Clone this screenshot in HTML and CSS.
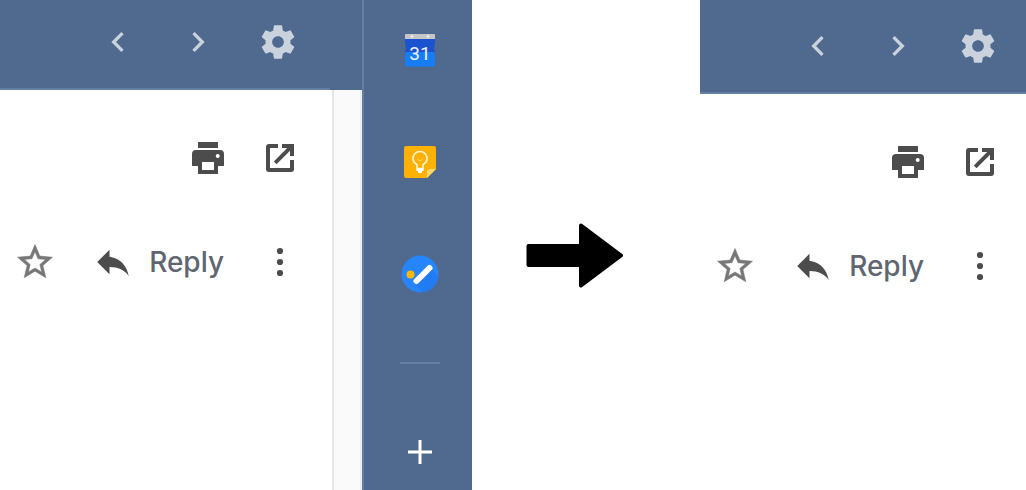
FILE: index.html
```
<!DOCTYPE html>
<html lang="en">
<head>
<meta charset="utf-8">
<meta name="viewport" content="width=device-width, initial-scale=1">
<title>Side panel before and after</title>
<link rel="stylesheet" href="styles.css">
</head>
<body>
<svg class="sprite" aria-hidden="true">
  <symbol id="prev" viewBox="0 0 24 24"><path d="M15.41 7.41 14 6l-6 6 6 6 1.41-1.41L10.83 12z"/></symbol>
  <symbol id="next" viewBox="0 0 24 24"><path d="M10 6 8.59 7.41 13.17 12l-4.58 4.59L10 18l6-6z"/></symbol>
  <symbol id="gear" viewBox="0 0 24 24"><path d="M19.43 12.98c.04-.32.07-.64.07-.98s-.03-.66-.07-.98l2.11-1.65c.19-.15.24-.42.12-.64l-2-3.46c-.12-.22-.39-.3-.61-.22l-2.49 1c-.52-.4-1.08-.73-1.69-.98l-.38-2.65C14.46 2.18 14.25 2 14 2h-4c-.25 0-.46.18-.49.42l-.38 2.65c-.61.25-1.17.59-1.69.98l-2.49-1c-.23-.09-.49 0-.61.22l-2 3.46c-.13.22-.07.49.12.64l2.11 1.65c-.04.32-.07.65-.07.98s.03.66.07.98l-2.11 1.65c-.19.15-.24.42-.12.64l2 3.46c.12.22.39.3.61.22l2.49-1c.52.4 1.08.73 1.69.98l.38 2.65c.03.24.24.42.49.42h4c.25 0 .46-.18.49-.42l.38-2.65c.61-.25 1.17-.59 1.69-.98l2.49 1c.23.09.49 0 .61-.22l2-3.46c.12-.22.07-.49-.12-.64l-2.11-1.65zM12 15.5c-1.93 0-3.5-1.57-3.5-3.5s1.57-3.5 3.5-3.5 3.5 1.57 3.5 3.5-1.57 3.5-3.5 3.5z"/></symbol>
  <symbol id="print" viewBox="0 0 40 40"><path fill-rule="evenodd" d="M10 4h20v6H10zM8 12h24a4 4 0 0 1 4 4v12h-6v8H10v-8H4V16a4 4 0 0 1 4-4zM14 24v8h12v-8zM29.7 16a2 2 0 1 0 0 4 2 2 0 0 0 0-4z"/></symbol>
  <symbol id="open" viewBox="0 0 40 40"><path d="M18 6v4h-8v20h20v-8h4v9a3 3 0 0 1-3 3H9a3 3 0 0 1-3-3V9a3 3 0 0 1 3-3zM22 6h12v12h-4v-5.200L16.500 26.200l-2.700-2.700L27.200 10H22z"/></symbol>
  <symbol id="star" viewBox="0 0 24 24"><path stroke="currentColor" stroke-width=".3" d="m22 9.240-7.190-.62L12 2 9.190 8.630 2 9.240l5.460 4.730L5.820 21 12 17.270 18.180 21l-1.630-7.030zM12 15.400l-3.760 2.270 1-4.280-3.320-2.880 4.380-.38L12 6.100l1.710 4.040 4.380.38-3.320 2.880 1 4.280z"/></symbol>
  <symbol id="reply" viewBox="0 0 24 24"><path d="M10 9V5l-7 7 7 7v-4.100c5 0 8.500 1.600 11 5.100-1-5-4-10-11-11z"/></symbol>
  <symbol id="more" viewBox="0 0 40 40"><circle cx="20" cy="9" r="3.100"/><circle cx="20" cy="20" r="3.100"/><circle cx="20" cy="31" r="3.100"/></symbol>
</svg>
<main class="comparison">
  <section class="before" aria-label="With side panel">
    <div class="view">
      <header class="bar">
        <button class="icon" aria-label="Previous"><svg><use href="#prev"/></svg></button>
        <button class="icon" aria-label="Next"><svg><use href="#next"/></svg></button>
        <button class="icon" aria-label="Settings"><svg><use href="#gear"/></svg></button>
      </header>
      <div class="body">
        <div class="mail">
          <div class="tools">
            <button class="icon" aria-label="Print"><svg><use href="#print"/></svg></button>
            <button class="icon" aria-label="Open in new window"><svg><use href="#open"/></svg></button>
          </div>
          <div class="actions">
            <button class="icon large star" aria-label="Star"><svg><use href="#star"/></svg></button>
            <button class="reply"><svg><use href="#reply"/></svg><span>Reply</span></button>
            <button class="icon" aria-label="More"><svg><use href="#more"/></svg></button>
          </div>
        </div>
        <div class="gutter"></div>
      </div>
    </div>
    <aside class="side">
      <button class="icon" aria-label="Calendar">
        <svg viewBox="0 0 40 40">
          <path fill="#c6c6c6" d="M6 4h28a1 1 0 0 1 1 1v5H5V5a1 1 0 0 1 1-1z"/>
          <circle cx="12" cy="6.500" r="1.200" fill="#f4f4f4"/>
          <circle cx="28" cy="6.500" r="1.200" fill="#f4f4f4"/>
          <path fill="#1b52d0" d="M5 9h30v4l-1 6 1 4H5l1-4-1-6z"/>
          <path fill="#177df7" d="M6 22h28l1 4v9a1.500 1.500 0 0 1-1.500 1.500h-27A1.500 1.500 0 0 1 5 35v-9z"/>
          <text class="date" x="20" y="29.500">31</text>
        </svg>
      </button>
      <button class="icon" aria-label="Keep">
        <svg viewBox="0 0 40 40">
          <path fill="#fcb103" d="M6 4h28a2 2 0 0 1 2 2v21l-9 9H6a2 2 0 0 1-2-2V6a2 2 0 0 1 2-2z"/>
          <path fill="#ffd86d" d="M27 36v-7a2 2 0 0 1 2-2h7z"/>
          <path fill="none" stroke="#fff4d7" stroke-width="1.600" d="M17 26.500v-4c-2.500-1.200-4-3.500-4-6a7 7 0 0 1 14 0c0 2.500-1.500 4.800-4 6v4z"/>
          <path fill="none" stroke="#fff4d7" stroke-opacity=".6" d="m17.500 17 2.500 2 2.500-2"/>
          <path fill="#fff" d="M16.500 26h7v3h-1.500v2h-4v-2h-1.500z"/>
        </svg>
      </button>
      <button class="icon" aria-label="Tasks">
        <svg viewBox="0 0 40 40">
          <circle cx="20" cy="20" r="18.500" fill="#2684fc"/>
          <path fill="#217cf3" d="m14.500 29 8 9.300c8-.8 14.500-7.300 15.700-15.300L32 15z"/>
          <circle cx="10.500" cy="20.500" r="4" fill="#fbb708"/>
          <path stroke="#fff" stroke-width="6" stroke-linecap="round" d="M16.500 27 29.500 14"/>
        </svg>
      </button>
      <hr class="divider">
      <button class="icon" aria-label="Get add-ons">
        <svg viewBox="0 0 40 40"><path fill="none" stroke="#fff" stroke-width="3" d="M8 20h24M20 8v24"/></svg>
      </button>
    </aside>
  </section>
  <div class="arrow">
    <svg viewBox="0 0 97 65" role="img" aria-label="becomes"><path stroke="#000" stroke-width="4" stroke-linejoin="round" d="M2.500 23H55V2.500L95 32.500 55 62.500V42H2.500z"/></svg>
  </div>
  <section class="view after" aria-label="Without side panel">
    <header class="bar">
      <button class="icon" aria-label="Previous"><svg><use href="#prev"/></svg></button>
      <button class="icon" aria-label="Next"><svg><use href="#next"/></svg></button>
      <button class="icon" aria-label="Settings"><svg><use href="#gear"/></svg></button>
    </header>
    <div class="mail">
      <div class="tools">
        <button class="icon" aria-label="Print"><svg><use href="#print"/></svg></button>
        <button class="icon" aria-label="Open in new window"><svg><use href="#open"/></svg></button>
      </div>
      <div class="actions">
        <button class="icon large star" aria-label="Star"><svg><use href="#star"/></svg></button>
        <button class="reply"><svg><use href="#reply"/></svg><span>Reply</span></button>
        <button class="icon" aria-label="More"><svg><use href="#more"/></svg></button>
      </div>
    </div>
  </section>
</main>
</body>
</html>
```
FILE: styles.css
```
* { box-sizing: border-box; }
body { margin: 0; background: #fff; font-family: Inter, Roboto, "Liberation Sans", sans-serif; }
button { display: flex; align-items: center; padding: 0; border: 0; background: none; color: inherit; font: inherit; cursor: pointer; }
svg { display: block; }
.sprite { position: absolute; width: 0; height: 0; }
.comparison { display: grid; grid-template-columns: 472fr 228fr 326fr; min-height: 100vh; }
.before { display: flex; }
.view { display: flex; flex-direction: column; flex: 1; }
.bar { display: flex; justify-content: flex-end; gap: 40px; padding: 22px 64px 28px 0; background: linear-gradient(#667e9f, #667e9f) left bottom / calc(100% - 32px) 2px no-repeat #4f6a8e; color: #cad2de; }
.after .bar { padding: 26px 28px 28px 0; background-size: 100% 2px; }
.icon { flex: none; width: 40px; height: 40px; }
.icon svg { width: 100%; height: 100%; fill: currentColor; }
.large { width: 42px; height: 42px; }
.body { display: flex; flex: 1; }
.mail { flex: 1; padding: 48px 32px 0 0; color: #4c4c4c; }
.after .mail { padding-right: 26px; }
.tools { display: flex; justify-content: flex-end; gap: 32px; }
.actions { display: flex; align-items: center; justify-content: flex-end; gap: 36px; margin-top: 63px; }
.star { color: #777; }
.reply { gap: 15px; }
.reply svg { width: 42px; height: 42px; fill: currentColor; }
.reply span { color: #5f6670; font-size: 28px; font-weight: 500; line-height: 32px; }
.gutter { width: 30px; background: #fafafa; border: solid #e6e6e6; border-width: 0 2px; border-right-color: #eee; }
.side { display: flex; flex-direction: column; align-items: center; width: 110px; padding: 30px 0 0 4px; background: #4f6a8e; border-left: 2px solid #667e9f; }
.side .icon + .icon { margin-top: 72px; }
.divider { width: 40px; height: 2px; margin: 68px 0; border: 0; background: #667e9f; }
.date { fill: #eef3fd; font-family: Roboto, sans-serif; font-size: 19px; font-weight: 400; text-anchor: middle; }
.arrow { display: flex; justify-content: center; align-items: flex-start; padding: 223px 23px 0 0; }
.arrow svg { width: 97px; height: 65px; }
```
